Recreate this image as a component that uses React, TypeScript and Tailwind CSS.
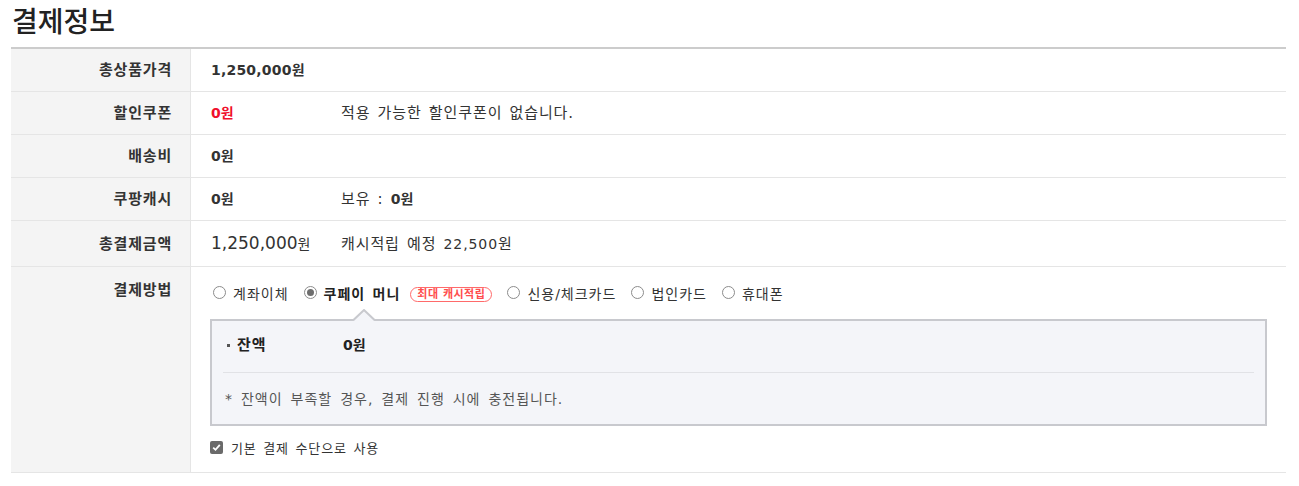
import React from 'react';

const Radio = ({ checked }: { checked?: boolean }) => (
  <span className="relative inline-block h-[13px] w-[13px] shrink-0 rounded-full border border-[#8c8c8c] bg-white">
    {checked && <span className="absolute left-[2px] top-[2px] h-[7px] w-[7px] rounded-full bg-[#6e6e6e]" />}
  </span>
);

type RowProps = {
  label: string;
  className?: string;
  top?: boolean;
  children: React.ReactNode;
};

const Row = ({ label, className = 'h-[43px] items-center', top, children }: RowProps) => (
  <div className={`flex border-b border-[#e5e5e5] ${className}`}>
    <div
      className={`flex w-[180px] shrink-0 self-stretch justify-end border-r border-[#e5e5e5] bg-[#f4f4f4] pr-[18px] text-[15px] font-bold leading-[20px] tracking-[0.8px] text-[#333] ${
        top ? 'items-start pt-[13px]' : 'items-center'
      }`}
    >
      {label}
    </div>
    <div className="flex-1 pl-[20px] pr-[19px]">{children}</div>
  </div>
);

const methods = [
  { name: '계좌이체' },
  { name: '쿠페이 머니', checked: true, badge: '최대 캐시적립' },
  { name: '신용/체크카드' },
  { name: '법인카드' },
  { name: '휴대폰' },
];

export default function App() {
  return (
    <div className="min-h-[486px] bg-white px-[11px] pr-[13px] font-['DejaVu_Sans','Noto_Sans_CJK_KR',sans-serif] text-[15px] tracking-[0.9px] text-[#333] [word-spacing:1.5px]">
      {/* Title */}
      <h2 className="h-[47px] pl-px pt-[6px] text-[28px] font-medium leading-[34px] tracking-normal text-[#222] [word-spacing:0]">
        결제정보
      </h2>

      <div className="border-t-2 border-[#cccccc]">
        <Row label="총상품가격">
          <span className="text-[14px] font-bold tracking-[0.2px]">1,250,000원</span>
        </Row>

        <Row label="할인쿠폰">
          <div className="flex items-center">
            <span className="w-[130px] text-[14px] font-bold tracking-normal text-[#f0102b]">0원</span>
            <span>적용 가능한 할인쿠폰이 없습니다.</span>
          </div>
        </Row>

        <Row label="배송비">
          <span className="text-[14px] font-bold tracking-normal">0원</span>
        </Row>

        <Row label="쿠팡캐시">
          <div className="flex items-center">
            <span className="w-[130px] text-[14px] font-bold tracking-normal">0원</span>
            <span>
              보유 : <span className="text-[14px] font-bold tracking-normal">0원</span>
            </span>
          </div>
        </Row>

        <Row label="총결제금액" className="h-[46px] items-center">
          <div className="flex items-baseline">
            <span className="w-[130px] tracking-normal">
              <span className="text-[17px]">1,250,000</span>
              <span className="text-[14px]">원</span>
            </span>
            <span>
              캐시적립 예정 <span className="text-[14px]">22,500</span>원
            </span>
          </div>
        </Row>

        <Row label="결제방법" className="h-[206px] items-start" top>
          {/* Methods */}
          <div className="flex items-center pt-[17px] text-[14px] leading-[20px] tracking-[1px]">
            {methods.map((m) => (
              <label key={m.name} className="mr-[13px] flex items-center">
                <span className="ml-[2px]">
                  <Radio checked={m.checked} />
                </span>
                <span className={`ml-[7px] ${m.checked ? 'font-bold text-[#222]' : ''}`}>{m.name}</span>
                {m.badge && (
                  <span className="ml-[10px] rounded-full border border-[#ff6a6a] px-[6px] text-[11px] font-bold leading-[13px] tracking-[0.5px] text-[#ff4d4d] [word-spacing:0]">
                    {m.badge}
                  </span>
                )}
              </label>
            ))}
          </div>

          {/* Balance box */}
          <div className="relative -ml-px mt-[15px] border-2 border-[#c8c9ce] bg-[#f4f5f9] px-[11px]">
            <svg className="absolute left-[141px] top-[-12px]" width="22" height="12" viewBox="0 0 22 12">
              <path d="M0 12 L11 1 L22 12 Z" fill="#f4f5f9" />
              <path d="M0 11.5 L11 1 L22 11.5" fill="none" stroke="#c8c9ce" strokeWidth="2" />
            </svg>
            <div className="flex items-center border-b border-[#e1e2e6] pb-[17px] pt-[14px] leading-[20px]">
              <span className="flex w-[120px] items-center pl-[4px] font-bold text-[#222]">
                <span className="mr-[7px] h-[3px] w-[3px] bg-[#555]" />
                잔액
              </span>
              <span className="text-[14px] font-bold tracking-normal text-[#222]">0원</span>
            </div>
            <p className="pb-[15px] pl-[2px] pt-[16px] text-[14px] leading-[20px] tracking-[1px] text-[#555] [word-spacing:2.5px]">
              * 잔액이 부족할 경우, 결제 진행 시에 충전됩니다.
            </p>
          </div>

          {/* Default checkbox */}
          <label className="-ml-px mt-[13px] flex items-center leading-[20px]">
            <span className="mb-[3px] flex h-[13px] w-[13px] items-center justify-center rounded-[2px] bg-[#6a6a6a]">
              <svg width="9" height="9" viewBox="0 0 9 9">
                <path d="M1.2 4.6 L3.5 6.8 L7.8 1.8" fill="none" stroke="#fff" strokeWidth="1.8" />
              </svg>
            </span>
            <span className="ml-[8px] text-[13px]">기본 결제 수단으로 사용</span>
          </label>
        </Row>
      </div>
    </div>
  );
}
